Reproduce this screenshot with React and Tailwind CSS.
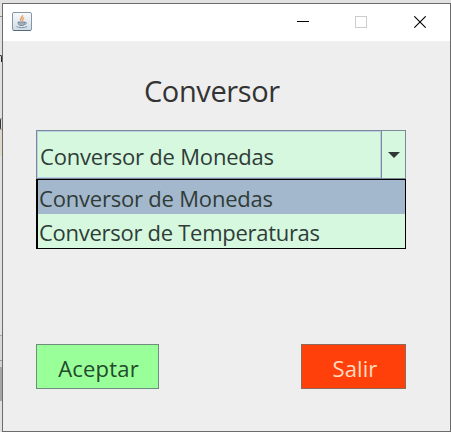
function JavaIcon() {
  return (
    <svg width="20" height="19" viewBox="0 0 20 19" className="block">
      <defs>
        <linearGradient id="cup" x1="0" y1="0" x2="0" y2="1">
          <stop offset="0" stopColor="#fafbfc" />
          <stop offset="1" stopColor="#cfdae5" />
        </linearGradient>
      </defs>
      <rect x="0.5" y="0.5" width="19" height="18" rx="1.5" fill="url(#cup)" stroke="#8796a4" />
      <path d="M1.5 18.5H18.5" stroke="#56697a" />
      <path d="M10.500 3.200C11.500 5.200 7 5.800 8.800 9M12.200 5.600C9.800 6.500 11.300 7.600 10.200 9.200" fill="none" stroke="#e8a468" strokeWidth="1.500" />
      <path d="M6 10H12.800C12.600 12.200 12 13.500 10.800 13.500H8.200C7 13.500 6.200 12 6 10Z" fill="#a3afb9" stroke="#6d7c8a" strokeWidth="0.800" />
      <path d="M12.800 10.300C15.300 9.900 15 12.200 12.200 12.500" fill="none" stroke="#7d8c9a" />
      <path d="M4.500 14.500C6.500 16 12.500 16 15 14.500" fill="none" stroke="#7d95ad" />
    </svg>
  );
}

function TitleBar() {
  return (
    <header className="flex h-[37px] shrink-0 justify-between bg-white pl-[9px] pr-6">
      <div className="pt-2">
        <JavaIcon />
      </div>
      <div className="flex pt-3">
        <svg width="12" height="12" className="mr-[46px]" shapeRendering="crispEdges">
          <path d="M0 5.500H12" stroke="#000" />
        </svg>
        <svg width="12" height="12" className="mr-[47px]" shapeRendering="crispEdges">
          <rect x="0.500" y="0.500" width="11" height="11" fill="none" stroke="#cccccc" />
        </svg>
        <svg width="12" height="12">
          <path d="M0.300 0.300L11.700 11.700M11.700 0.300L0.300 11.700" stroke="#000" strokeWidth="1.100" />
        </svg>
      </div>
    </header>
  );
}

function ComboBox() {
  return (
    <div className="text-[22px] leading-[34px] text-[#303c38]">
      <div className="flex h-[49px] border border-[#7a8a99] bg-[#d6f8de]">
        <div className="flex flex-1 items-center border border-[#b8cfe5] pl-0.5 pt-[3px]">
          <span className="whitespace-nowrap tracking-[-0.2px]">Conversor de Monedas</span>
        </div>
        <div className="flex w-6 items-center justify-center border-l border-[#7a8a99]">
          <svg width="12" height="6" className="block">
            <path d="M0 0H12L6 6Z" fill="#303833" />
          </svg>
        </div>
      </div>
      <ul className="h-[70px] border border-l-2 border-black bg-[#d6f8de]">
        <li className="h-[34px] whitespace-nowrap bg-[#a3b8cc] pl-px pt-px tracking-[-0.2px]">Conversor de Monedas</li>
        <li className="h-[34px] whitespace-nowrap pl-px pt-px tracking-[-0.28px]">Conversor de Temperaturas</li>
      </ul>
    </div>
  );
}

export default function App() {
  return (
    <div className="flex h-[432px] w-[451px] overflow-hidden bg-[#e1e1e1] font-['Open_Sans','Noto_Sans',sans-serif]">
      <div className="flex h-full w-[2px] shrink-0 flex-col overflow-hidden">
        <div className="h-4 shrink-0" />
        <div className="h-px shrink-0 bg-[#888]" />
        <div className="h-[38px] shrink-0" />
        <div className="h-[7px] w-[2px] shrink-0 rounded-tr-sm border-r border-t border-[#222]" />
        <div className="h-[56px] shrink-0" />
        <div className="h-3 w-[2px] shrink-0 rounded-l border-l border-[#333]" />
        <div className="h-[26px] shrink-0 bg-[#ded9cb]" />
        <div className="h-[179px] shrink-0" />
        <div className="h-px shrink-0 bg-[#aaa]" />
        <div className="h-6 shrink-0 bg-[#d8d8d8]" />
        <div className="h-px shrink-0 bg-[#999]" />
        <div className="h-1.5 shrink-0 bg-[#d2d2d2]" />
        <div className="h-[34px] shrink-0 bg-[#a6a6a6]" />
      </div>
      <div className="flex-1 pt-[3px]">
        <main className="flex h-[429px] w-[449px] flex-col border border-[#6c6c6c] bg-[#eeeeee]">
          <TitleBar />
          <div className="flex flex-1 flex-col pl-[33px] pr-11">
            <h1 className="mt-[29px] h-[60px] pl-[108px] text-[29px] leading-[42px] tracking-[-0.4px] text-[#333333]">Conversor</h1>
            <ComboBox />
            <div className="mt-[95px] flex justify-between">
              <button className="h-[45px] w-[123px] border border-[#6f8c7c] bg-[#99ff99] pl-0.5 pt-[3px] text-[22px] leading-[30px] tracking-[0.2px] text-[#24492c]">
                Aceptar
              </button>
              <button className="h-[45px] w-[105px] border border-[#8e6a5b] bg-[#ff400a] pl-[3px] pt-[3px] text-[22px] leading-[30px] tracking-[0.1px] text-[#ffdcc0]">
                Salir
              </button>
            </div>
          </div>
        </main>
      </div>
    </div>
  );
}
